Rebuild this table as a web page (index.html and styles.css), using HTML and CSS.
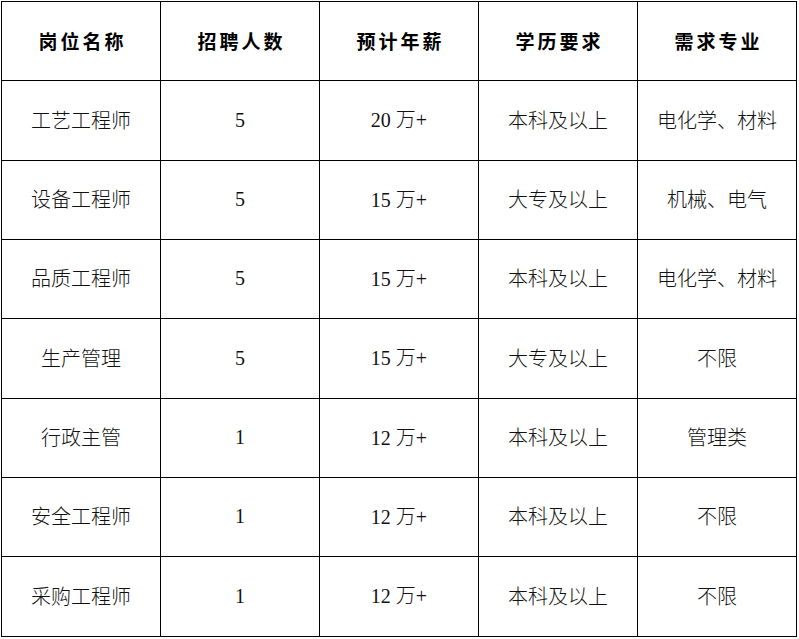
FILE: index.html
```html
<!DOCTYPE html>
<html lang="zh-CN">
<head>
<meta charset="utf-8">
<title>招聘岗位</title>
<link rel="stylesheet" href="styles.css">
</head>
<body>
<div class="table">
  <div class="cell head">岗位名称</div>
  <div class="cell head">招聘人数</div>
  <div class="cell head">预计年薪</div>
  <div class="cell head">学历要求</div>
  <div class="cell head">需求专业</div>

  <div class="cell">工艺工程师</div>
  <div class="cell num">5</div>
  <div class="cell num"><span>20 <span class="cjk">万</span>+</span></div>
  <div class="cell">本科及以上</div>
  <div class="cell">电化学、材料</div>

  <div class="cell">设备工程师</div>
  <div class="cell num">5</div>
  <div class="cell num"><span>15 <span class="cjk">万</span>+</span></div>
  <div class="cell">大专及以上</div>
  <div class="cell">机械、电气</div>

  <div class="cell">品质工程师</div>
  <div class="cell num">5</div>
  <div class="cell num"><span>15 <span class="cjk">万</span>+</span></div>
  <div class="cell">本科及以上</div>
  <div class="cell">电化学、材料</div>

  <div class="cell">生产管理</div>
  <div class="cell num">5</div>
  <div class="cell num"><span>15 <span class="cjk">万</span>+</span></div>
  <div class="cell">大专及以上</div>
  <div class="cell">不限</div>

  <div class="cell">行政主管</div>
  <div class="cell num">1</div>
  <div class="cell num"><span>12 <span class="cjk">万</span>+</span></div>
  <div class="cell">本科及以上</div>
  <div class="cell">管理类</div>

  <div class="cell">安全工程师</div>
  <div class="cell num">1</div>
  <div class="cell num"><span>12 <span class="cjk">万</span>+</span></div>
  <div class="cell">本科及以上</div>
  <div class="cell">不限</div>

  <div class="cell">采购工程师</div>
  <div class="cell num">1</div>
  <div class="cell num"><span>12 <span class="cjk">万</span>+</span></div>
  <div class="cell">本科及以上</div>
  <div class="cell">不限</div>
</div>
</body>
</html>
```

FILE: styles.css
```css
html, body {
  margin: 0;
  padding: 0;
  background: #ffffff;
}

body {
  padding: 1px 0 0 1px;
  font-family: "Noto Sans CJK SC", "Noto Sans", sans-serif;
  color: #111111;
}

.table {
  display: grid;
  grid-template-columns: repeat(5, 159px);
  grid-template-rows: 79px 80px 79px 79px 80px 79px 79px 80px;
  width: max-content;
  border-left: 1px solid #000;
  border-top: 1px solid #000;
}

.cell {
  display: flex;
  align-items: center;
  justify-content: center;
  border-right: 1px solid #000;
  border-bottom: 1px solid #000;
  font-size: 20px;
  font-weight: 300;
  line-height: 1;
  padding-bottom: 2px;
}

.head {
  font-size: 19px;
  font-weight: 700;
  letter-spacing: 3px;
  padding-left: 3px;
  color: #000;
}

.num {
  font-family: "Liberation Serif", "Noto Sans CJK SC", serif;
  font-weight: 400;
}

.cjk {
  font-family: "Noto Sans CJK SC", sans-serif;
  font-weight: 300;
}
```
